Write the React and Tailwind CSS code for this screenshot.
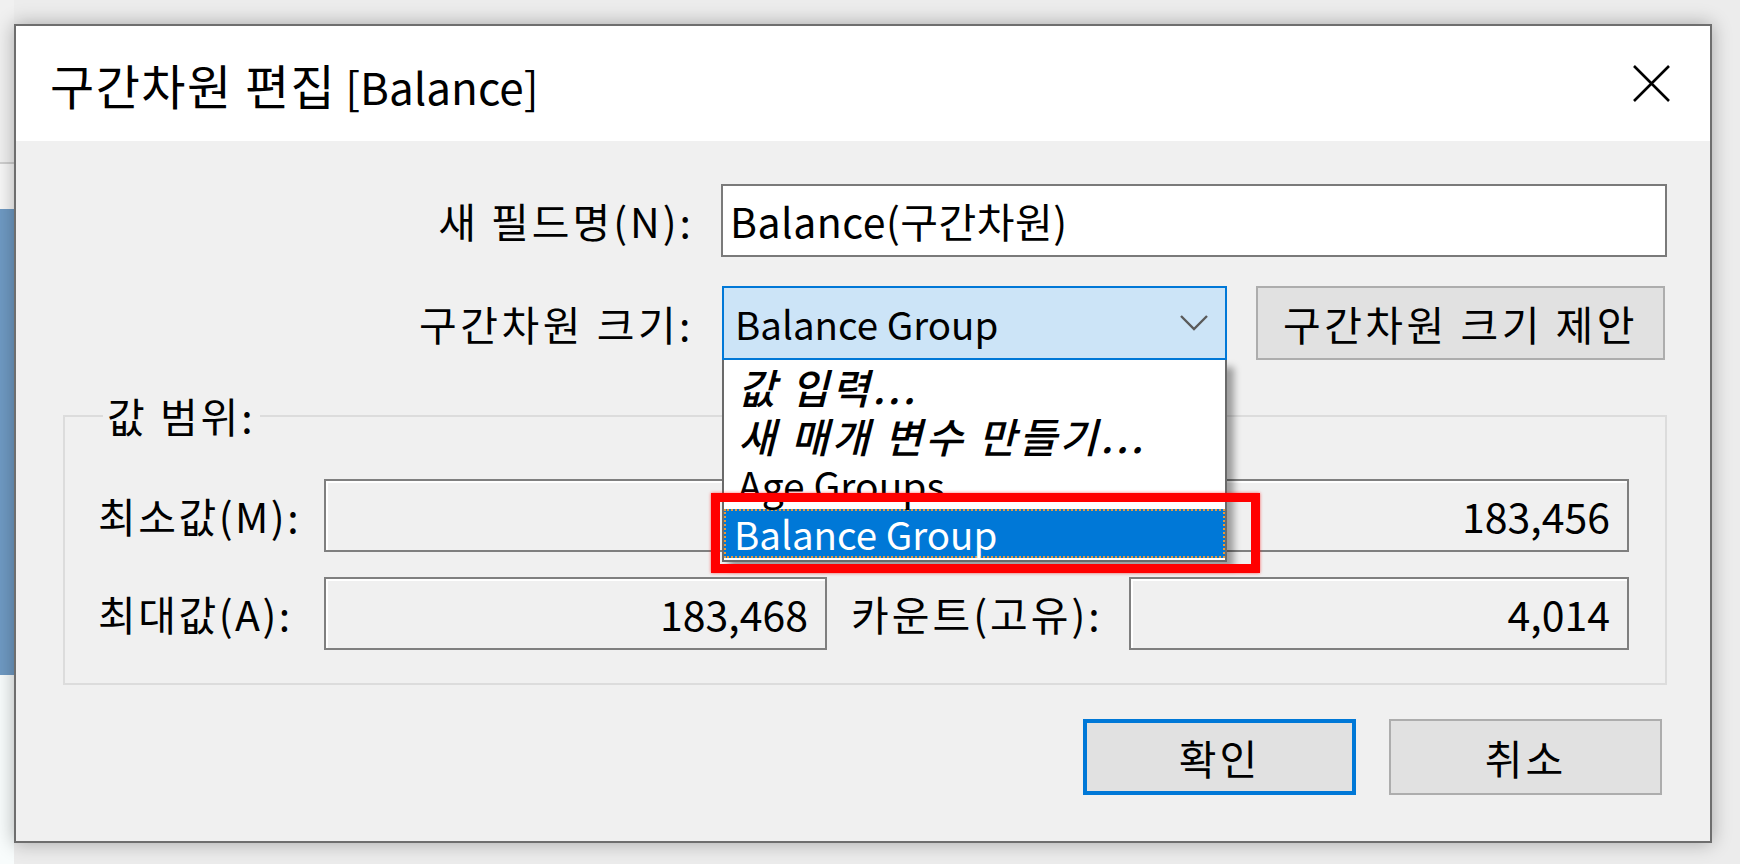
import React from "react";

const ReadOnlyBox = ({ value, width }) => (
  <div
    className={`${width} h-[73px] border-2 border-[#7f7f7f] bg-[#f0f0f0] shadow-[inset_2px_2px_0_#ffffff] flex items-center justify-end pr-[17px]`}
  >
    {value}
  </div>
);

const Dropdown = () => (
  <div className="absolute left-0 top-full w-full bg-white border-2 border-t-0 border-[#6a6a6a] shadow-[7px_7px_7px_rgba(0,0,0,0.35)] pt-[2px] pb-[2px] z-10">
    <div className="h-[49px] flex items-center pl-[14px] italic font-medium tracking-[3px]">값 입력...</div>
    <div className="h-[49px] flex items-center pl-[14px] italic font-medium tracking-[3px]">새 매개 변수 만들기...</div>
    <div className="h-[49px] flex items-center pl-[14px] text-[39px]">Age Groups</div>
    <div className="h-[49px] flex items-center pl-[8px] bg-[#0078d7] text-white text-[38.5px] border-2 border-dotted border-[#e89a3c]">
      Balance Group
    </div>
  </div>
);

const Dialog = () => (
  <div className="w-[1698px] h-[819px] border-2 border-[#6e6e6e] bg-[#f0f0f0] flex flex-col shadow-[0_0_18px_rgba(0,0,0,0.3)]">
    <div className="h-[115px] bg-white flex items-center justify-between pl-[34px] pr-[38px] shrink-0">
      <span className="leading-none flex items-baseline">
        <span className="text-[48px] tracking-[1.5px]">구간차원 편집</span>
        <span className="text-[44px] ml-[9px]">[Balance]</span>
      </span>
      <svg width="41" height="41" viewBox="0 0 41 41">
        <path d="M3 3 L38 38 M38 3 L3 38" stroke="#000" strokeWidth="2.6" fill="none" />
      </svg>
    </div>

    <div className="flex-1 pt-[43px] pr-[43px] text-[41px] leading-none">
      <div className="flex items-center">
        <div className="w-[678px] text-right tracking-[3px]">새 필드명(N):</div>
        <div className="flex-1 ml-[27px] h-[73px] bg-white border-2 border-[#7a7a7a] flex items-center pl-[7px] tracking-[0.5px]">
          Balance(구간차원)
        </div>
      </div>

      <div className="flex items-center mt-[29px]">
        <div className="w-[678px] text-right tracking-[3.5px]">구간차원 크기:</div>
        <div className="relative ml-[28px] w-[505px] h-[74px]">
          <div className="w-full h-full bg-[#cce4f7] border-2 border-[#0078d7] flex items-center justify-between pl-[11px] pr-[16px]">
            <span className="text-[38.5px]">Balance Group</span>
            <svg width="30" height="18" viewBox="0 0 30 18">
              <path d="M2 2 L15 15 L28 2" stroke="#5a5a5a" strokeWidth="2.4" fill="none" />
            </svg>
          </div>
          <Dropdown />
          <div className="absolute left-[-11px] top-[207px] w-[549px] h-[80px] border-[9px] border-[#ff0000] z-20 shadow-[0_0_3px_rgba(255,0,0,0.6)]" />
        </div>
        <button className="ml-[29px] w-[409px] h-[74px] bg-[#e1e1e1] border-2 border-[#adadad] flex items-center justify-center tracking-[3.5px]">
          구간차원 크기 제안
        </button>
      </div>

      <fieldset className="mt-[35px] ml-[47px] border-2 border-[#dcdcdc] pl-[33px] pb-[33px]">
        <legend className="ml-[5px] px-[4px] leading-none tracking-[3px]">값 범위:</legend>
        <div className="flex items-center mt-[43px]">
          <div className="w-[226px] tracking-[2.5px]">최소값(M):</div>
          <ReadOnlyBox value="12" width="w-[503px]" />
          <div className="ml-[24px] w-[278px] tracking-[3px]">차이(D):</div>
          <ReadOnlyBox value="183,456" width="w-[500px]" />
        </div>
        <div className="flex items-center mt-[25px]">
          <div className="w-[226px] tracking-[2.5px]">최대값(A):</div>
          <ReadOnlyBox value="183,468" width="w-[503px]" />
          <div className="ml-[24px] w-[278px] tracking-[3px]">카운트(고유):</div>
          <ReadOnlyBox value="4,014" width="w-[500px]" />
        </div>
      </fieldset>

      <div className="flex justify-end gap-[33px] mt-[34px] pr-[5px]">
        <button className="w-[273px] h-[76px] bg-[#e1e1e1] border-[4px] border-[#0078d7] flex items-center justify-center tracking-[3px]">
          확인
        </button>
        <button className="w-[273px] h-[76px] bg-[#e1e1e1] border-2 border-[#adadad] flex items-center justify-center tracking-[3px]">
          취소
        </button>
      </div>
    </div>
  </div>
);

export default function App() {
  return (
    <div className="w-[1740px] h-[864px] bg-[#ececec] flex overflow-hidden font-['Noto_Sans_CJK_KR',sans-serif] text-black">
      <div className="w-[14px] flex flex-col shrink-0">
        <div className="h-[164px] bg-[#f0f0f0] border-b-2 border-[#cfcfcf]" />
        <div className="h-[45px] bg-[#f7f7f7]" />
        <div className="h-[466px] bg-[#6f9ac3]" />
        <div className="flex-1 bg-[#f8fcfc]" />
      </div>
      <div className="pt-[24px] shrink-0">
        <Dialog />
      </div>
    </div>
  );
}
